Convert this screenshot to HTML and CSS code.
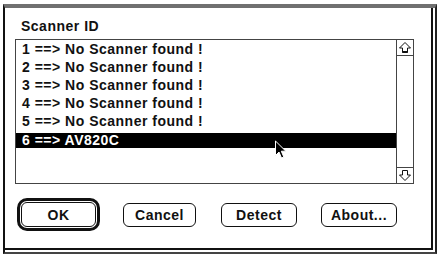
FILE: index.html
```html
<!DOCTYPE html>
<html>
<head>
<meta charset="utf-8">
<link rel="stylesheet" href="styles.css">
</head>
<body>
<div class="frame">
  <div class="inner">
    <div class="title">Scanner ID</div>
    <div class="list">
      <div class="items">
        <div class="row">1 ==&gt; No Scanner found !</div>
        <div class="row">2 ==&gt; No Scanner found !</div>
        <div class="row">3 ==&gt; No Scanner found !</div>
        <div class="row">4 ==&gt; No Scanner found !</div>
        <div class="row">5 ==&gt; No Scanner found !</div>
        <div class="row selected">6 ==&gt; AV820C</div>
      </div>
      <div class="scroll">
        <div class="arrow arrow-up">
          <svg width="16" height="15" viewBox="0 0 16 15"><path d="M8 2.5 L13.5 8 L10.5 8 L10.5 12.5 L5.5 12.5 L5.5 8 L2.5 8 Z" fill="#fff" stroke="#111" stroke-width="1"/><rect x="5.5" y="11" width="5" height="1.8" fill="#111"/></svg>
        </div>
        <div class="track"></div>
        <div class="arrow arrow-down">
          <svg width="16" height="15" viewBox="0 0 16 15"><path d="M8 12.5 L13.5 7 L10.5 7 L10.5 2.5 L5.5 2.5 L5.5 7 L2.5 7 Z" fill="#fff" stroke="#111" stroke-width="1"/></svg>
        </div>
      </div>
    </div>
    <div class="buttons">
      <div class="btn-ring"><div class="btn-face">OK</div></div>
      <div class="btn btn-cancel">Cancel</div>
      <div class="btn btn-detect">Detect</div>
      <div class="btn btn-about">About...</div>
    </div>
  </div>
</div>
<svg class="cursor" width="13" height="20" viewBox="0 0 13 20"><path d="M1.5 1 L1.5 15.5 L5 12 L7.5 18 L9.8 17 L7.3 11.2 L11.8 11.2 Z" fill="#000" stroke="#fff" stroke-width="1"/></svg>
</body>
</html>
```
FILE: styles.css
```css
html, body {
  margin: 0;
  padding: 0;
  background: #fff;
  overflow: hidden;
}
body {
  font-family: "Liberation Sans", Arial, sans-serif;
  font-weight: bold;
  font-size: 14px;
  color: #111;
  letter-spacing: 0.5px;
  position: relative;
  width: 439px;
  height: 254px;
}
.frame {
  box-sizing: border-box;
  margin: 4px 0 0 3px;
  width: 434px;
  height: 250px;
  border-top: 4px solid #707070;
  border-left: 2px solid #111;
  border-right: 2px solid #222;
  border-bottom: 2px solid #444;
  display: flex;
}
.inner {
  box-sizing: border-box;
  flex: 1;
  margin: 0 2px 2px 0;
  border-right: 2px solid #111;
  border-bottom: 2px solid #111;
  padding: 10px 0 0 10px;
  display: flex;
  flex-direction: column;
}
.title {
  height: 16px;
  line-height: 16px;
  padding-left: 6px;
  margin-bottom: 5px;
}
.list {
  box-sizing: border-box;
  width: 399px;
  height: 145px;
  border: 1px solid #444;
  display: flex;
}
.items {
  flex: 1;
  display: flex;
  flex-direction: column;
}
.row {
  height: 18px;
  line-height: 18px;
  padding-left: 6px;
  white-space: nowrap;
}
.row.selected {
  margin-top: 3px;
  height: 15px;
  line-height: 15px;
  background: #000;
  color: #fff;
}
.scroll {
  box-sizing: border-box;
  width: 17px;
  border-left: 1px solid #444;
  display: flex;
  flex-direction: column;
}
.arrow {
  box-sizing: border-box;
  height: 16px;
  display: flex;
  align-items: center;
  justify-content: center;
}
.arrow svg { display: block; }
.arrow-up { border-bottom: 1px solid #444; }
.arrow-down { border-top: 1px solid #444; }
.track { flex: 1; }
.buttons {
  display: flex;
  align-items: center;
  margin: 14px 0 0 2px;
}
.btn-ring {
  box-sizing: border-box;
  width: 83px;
  height: 33px;
  border: 3px solid #111;
  border-radius: 10px;
  padding: 1px;
  display: flex;
}
.btn-face {
  flex: 1;
  border: 1px solid #111;
  border-radius: 6px;
  display: flex;
  align-items: center;
  justify-content: center;
}
.btn {
  box-sizing: border-box;
  height: 24px;
  border: 1px solid #111;
  border-radius: 6px;
  display: flex;
  align-items: center;
  justify-content: center;
}
.btn-cancel { width: 73px; margin-left: 23px; }
.btn-detect { width: 76px; margin-left: 25px; }
.btn-about { width: 76px; margin-left: 24px; }
.cursor {
  position: absolute;
  left: 274px;
  top: 140px;
}
```
